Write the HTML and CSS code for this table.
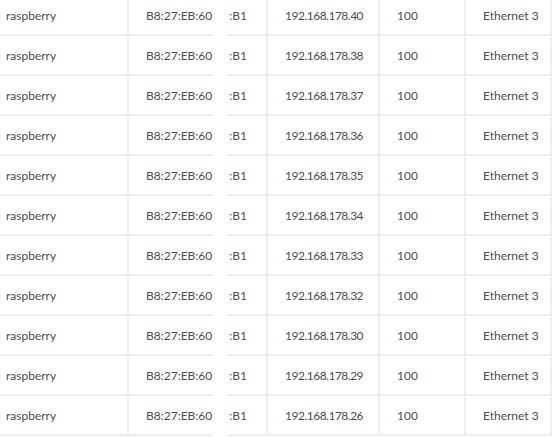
FILE: index.html
```html
<!DOCTYPE html>
<html>
<head>
<meta charset="utf-8">
<link rel="stylesheet" href="styles.css">
</head>
<body>
<div class="wrap">
<table class="devices">
<tbody>
<tr><td class="c-name">raspberry</td><td class="c-mac">B8:27:EB:60:<span class="hid"></span>:B1</td><td class="c-ip">192.168.178.40</td><td class="c-speed">100</td><td class="c-if">Ethernet 3</td></tr>
<tr><td class="c-name">raspberry</td><td class="c-mac">B8:27:EB:60:<span class="hid"></span>:B1</td><td class="c-ip">192.168.178.38</td><td class="c-speed">100</td><td class="c-if">Ethernet 3</td></tr>
<tr><td class="c-name">raspberry</td><td class="c-mac">B8:27:EB:60:<span class="hid"></span>:B1</td><td class="c-ip">192.168.178.37</td><td class="c-speed">100</td><td class="c-if">Ethernet 3</td></tr>
<tr><td class="c-name">raspberry</td><td class="c-mac">B8:27:EB:60:<span class="hid"></span>:B1</td><td class="c-ip">192.168.178.36</td><td class="c-speed">100</td><td class="c-if">Ethernet 3</td></tr>
<tr><td class="c-name">raspberry</td><td class="c-mac">B8:27:EB:60:<span class="hid"></span>:B1</td><td class="c-ip">192.168.178.35</td><td class="c-speed">100</td><td class="c-if">Ethernet 3</td></tr>
<tr><td class="c-name">raspberry</td><td class="c-mac">B8:27:EB:60:<span class="hid"></span>:B1</td><td class="c-ip">192.168.178.34</td><td class="c-speed">100</td><td class="c-if">Ethernet 3</td></tr>
<tr><td class="c-name">raspberry</td><td class="c-mac">B8:27:EB:60:<span class="hid"></span>:B1</td><td class="c-ip">192.168.178.33</td><td class="c-speed">100</td><td class="c-if">Ethernet 3</td></tr>
<tr><td class="c-name">raspberry</td><td class="c-mac">B8:27:EB:60:<span class="hid"></span>:B1</td><td class="c-ip">192.168.178.32</td><td class="c-speed">100</td><td class="c-if">Ethernet 3</td></tr>
<tr><td class="c-name">raspberry</td><td class="c-mac">B8:27:EB:60:<span class="hid"></span>:B1</td><td class="c-ip">192.168.178.30</td><td class="c-speed">100</td><td class="c-if">Ethernet 3</td></tr>
<tr><td class="c-name">raspberry</td><td class="c-mac">B8:27:EB:60:<span class="hid"></span>:B1</td><td class="c-ip">192.168.178.29</td><td class="c-speed">100</td><td class="c-if">Ethernet 3</td></tr>
<tr><td class="c-name">raspberry</td><td class="c-mac">B8:27:EB:60:<span class="hid"></span>:B1</td><td class="c-ip">192.168.178.26</td><td class="c-speed">100</td><td class="c-if">Ethernet 3</td></tr>
</tbody>
</table>
<div class="mask"></div>
</div>
</body>
</html>
```
FILE: styles.css
```css
html, body {
  margin: 0;
  padding: 0;
  background: #ffffff;
  overflow: hidden;
}
.wrap {
  position: relative;
  margin-top: -4px;
}
.devices {
  border-collapse: separate;
  border-spacing: 0;
  table-layout: fixed;
  font-family: Lato, "Liberation Sans", sans-serif;
  font-size: 12px;
  color: #4d4d4d;
}
.devices td {
  box-sizing: border-box;
  height: 40px;
  padding: 0 0 0 17px;
  border-right: 2px solid #eeeeee;
  border-bottom: 2px solid #eeeeee;
  white-space: nowrap;
  vertical-align: middle;
  overflow: hidden;
}
.devices .c-name { width: 129px; padding-left: 6px; }
.devices .c-mac { width: 139px; }
.devices .c-ip { width: 112px; letter-spacing: -0.5px; }
.devices .c-speed { width: 86px; }
.devices .c-if { width: 86px; }
.hid {
  display: inline-block;
  width: 14px;
}
.mask {
  position: absolute;
  left: 212px;
  top: 0;
  bottom: 0;
  width: 15px;
  background: #ffffff;
}
```
